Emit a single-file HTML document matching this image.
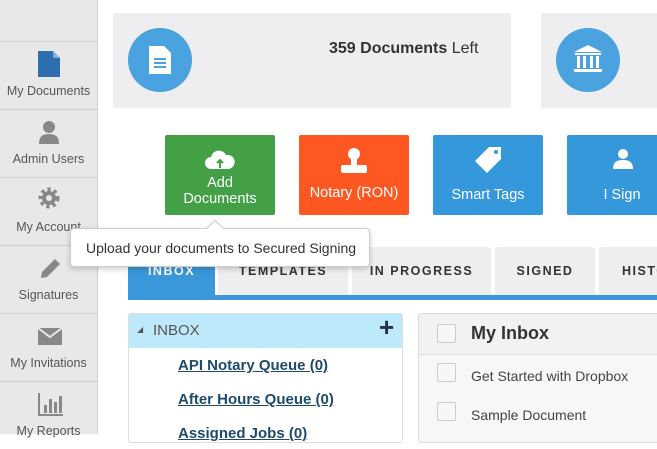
<!DOCTYPE html>
<html><head><style>
*{box-sizing:border-box;margin:0;padding:0}
body{width:657px;height:434px;overflow:hidden;background:#fff;font-family:"Liberation Sans",sans-serif;position:relative}
.abs{position:absolute}
.side{left:0;top:0;width:98px;height:434px;background:#e8e8e8;border-right:1px solid #d0d0d0}
.si{position:absolute;left:0;width:97px;height:68px;border-top:1px solid #cfcfcf;text-align:center;color:#555;font-size:12.5px}
.si .lb{position:absolute;left:0;right:0;top:42px}
.si svg{position:absolute;left:37px;top:8px}
.card{background:#eeeef0}
.circ{border-radius:50%;background:#4aa3df}
.btn{top:135px;width:110px;height:80px;color:#fff;text-align:center;font-size:14.5px;border-radius:2px}
.tab{top:247px;height:48px;background:#eee;color:#333;font-size:12.5px;font-weight:bold;letter-spacing:1.5px;text-align:center;line-height:48px;border-radius:3px 3px 0 0}
.lnk{left:178px;color:#1e4a6d;font-weight:bold;font-size:15px;text-decoration:underline}
.cb{width:19px;height:19px;border:1px solid #ccc;border-radius:2px;background:#f5f6f7}
</style></head><body>
<div class="abs side">
 <div class="si" style="top:41px"><svg width="24" height="28" viewBox="0 0 24 28"><path d="M1 1h15l7 7v19H1z" fill="#2e6fb0"/><path d="M16 1v7h7" fill="#7fb0e0"/></svg><div class="lb">My Documents</div></div>
 <div class="si" style="top:109px"><svg width="24" height="28" viewBox="0 0 24 28"><circle cx="12" cy="9" r="6" fill="#888"/><path d="M2 26c0-8 4-10 10-10s10 2 10 10z" fill="#888"/></svg><div class="lb">Admin Users</div></div>
 <div class="si" style="top:177px"><svg width="24" height="28" viewBox="0 0 24 28"><circle cx="12" cy="12" r="8" fill="none" stroke="#888" stroke-width="5" stroke-dasharray="3 3"/><circle cx="12" cy="12" r="7" fill="#888"/><circle cx="12" cy="12" r="3" fill="#e8e8e8"/></svg><div class="lb">My Account</div></div>
 <div class="si" style="top:245px"><svg width="24" height="28" viewBox="0 0 24 28"><path d="M4 24l1-6 13-13 5 5-13 13z" fill="#888"/></svg><div class="lb">Signatures</div></div>
 <div class="si" style="top:313px"><svg width="26" height="28" viewBox="0 0 26 28"><rect x="1" y="6" width="24" height="17" fill="#888"/><path d="M1 6l12 9 12-9" fill="none" stroke="#e8e8e8" stroke-width="2"/></svg><div class="lb">My Invitations</div></div>
 <div class="si" style="top:381px"><svg width="26" height="28" viewBox="0 0 26 28"><path d="M2 3v22h24" fill="none" stroke="#888" stroke-width="2"/><rect x="7" y="15" width="3" height="8" fill="#888"/><rect x="12" y="9" width="3" height="14" fill="#888"/><rect x="17" y="12" width="3" height="11" fill="#888"/><rect x="22" y="6" width="3" height="17" fill="#888"/></svg><div class="lb">My Reports</div></div>
</div>
<div class="abs card" style="left:113px;top:13px;width:398px;height:95px"></div>
<div class="abs circ" style="left:128px;top:28px;width:64px;height:64px"><svg class="abs" style="left:20px;top:17px" width="24" height="30" viewBox="0 0 24 30"><path d="M1 1h15l7 7v21H1z" fill="#fff"/><path d="M6 14h12M6 18h12M6 22h12" stroke="#4aa3df" stroke-width="2"/></svg></div>
<div class="abs" style="left:329px;top:40px;font-size:16px;color:#333"><b>359 Documents</b> Left</div>
<div class="abs card" style="left:541px;top:13px;width:130px;height:95px"></div>
<div class="abs circ" style="left:556px;top:28px;width:64px;height:64px"><svg class="abs" style="left:16px;top:15px" width="32" height="32" viewBox="0 0 32 32"><path d="M16 2L2 9h28z" fill="#fff"/><rect x="3" y="10" width="26" height="2" fill="#fff"/><rect x="5" y="13" width="3" height="12" fill="#fff"/><rect x="11" y="13" width="3" height="12" fill="#fff"/><rect x="18" y="13" width="3" height="12" fill="#fff"/><rect x="24" y="13" width="3" height="12" fill="#fff"/><rect x="2" y="26" width="28" height="3" fill="#fff"/></svg></div>

<div class="abs btn" style="left:165px;background:#43a047"><svg class="abs" style="left:40px;top:15px" width="30" height="20" viewBox="0 0 30 20"><path d="M6 19a6 6 0 010-12 8 8 0 0115-2 6 6 0 013 14z" fill="#fff"/><path d="M15 18v-7M12 13l3-3 3 3" stroke="#43a047" stroke-width="2" fill="none"/></svg><div class="abs" style="left:0;right:0;top:40px;line-height:16px">Add<br>Documents</div></div>
<div class="abs btn" style="left:299px;background:#ff5722"><svg class="abs" style="left:40px;top:12px" width="30" height="30" viewBox="0 0 30 30"><circle cx="15" cy="7" r="6" fill="#fff"/><rect x="12" y="10" width="6" height="8" fill="#fff"/><rect x="2" y="18" width="26" height="8" rx="2" fill="#fff"/></svg><div class="abs" style="left:0;right:0;top:50px">Notary (RON)</div></div>
<div class="abs btn" style="left:433px;background:#3498db"><svg class="abs" style="left:41px;top:10px" width="30" height="30" viewBox="0 0 30 30"><path d="M15 2h12v12L13 28 1 16z" fill="#fff"/><circle cx="22" cy="7" r="2" fill="#3498db"/></svg><div class="abs" style="left:0;right:0;top:52px">Smart Tags</div></div>
<div class="abs btn" style="left:567px;background:#3498db"><svg class="abs" style="left:44px;top:12px" width="24" height="24" viewBox="0 0 24 24"><circle cx="12" cy="7" r="5" fill="#fff"/><path d="M2 22c0-7 4-9 10-9s10 2 10 9z" fill="#fff"/></svg><div class="abs" style="left:0;right:0;top:52px">I Sign</div></div>

<div class="abs tab" style="left:128px;width:87px;background:#3a97d9;color:#fff">INBOX</div>
<div class="abs tab" style="left:218px;width:130px">TEMPLATES</div>
<div class="abs tab" style="left:352px;width:139px">IN PROGRESS</div>
<div class="abs tab" style="left:495px;width:100px">SIGNED</div>
<div class="abs tab" style="left:599px;width:80px;text-align:left;padding-left:23px">HISTORY</div>
<div class="abs" style="left:128px;top:295px;width:529px;height:5px;background:#3a97d9"></div>

<div class="abs" style="left:70px;top:228px;width:300px;height:39px;background:#fff;border:1px solid #ccc;border-radius:4px;box-shadow:0 2px 6px rgba(0,0,0,.2);font-size:14px;color:#333;line-height:38px;padding-left:15px">Upload your documents to Secured Signing</div>
<div class="abs" style="left:209px;top:222px;width:12px;height:12px;background:#fff;border-left:1px solid #ccc;border-top:1px solid #ccc;transform:rotate(45deg)"></div>

<div class="abs" style="left:128px;top:313px;width:275px;height:130px;border:1px solid #ddd;border-radius:3px"></div>
<div class="abs" style="left:129px;top:314px;width:273px;height:34px;background:#bde9fb"></div>
<div class="abs" style="left:137px;top:325px;font-size:8px;color:#555">◢</div>
<div class="abs" style="left:153px;top:322px;font-size:15px;color:#555">INBOX</div>
<div class="abs" style="left:379px;top:312px;font-size:26px;font-weight:bold;color:#234">+</div>
<div class="abs lnk" style="top:357px">API Notary Queue (0)</div>
<div class="abs lnk" style="top:391px">After Hours Queue (0)</div>
<div class="abs lnk" style="top:425px">Assigned Jobs (0)</div>

<div class="abs" style="left:418px;top:313px;width:250px;height:130px;border:1px solid #ddd;border-radius:3px;background:#f7f7f7"></div>
<div class="abs" style="left:419px;top:314px;width:250px;height:41px;background:#f2f2f2;border-bottom:1px solid #ddd"></div>
<div class="abs cb" style="left:437px;top:324px"></div>
<div class="abs" style="left:471px;top:323px;font-size:18px;font-weight:bold;color:#333">My Inbox</div>
<div class="abs cb" style="left:437px;top:363px"></div>
<div class="abs" style="left:471px;top:368px;font-size:14px;color:#444">Get Started with Dropbox</div>
<div class="abs cb" style="left:437px;top:402px"></div>
<div class="abs" style="left:471px;top:407px;font-size:14px;color:#444">Sample Document</div>
</body></html>
